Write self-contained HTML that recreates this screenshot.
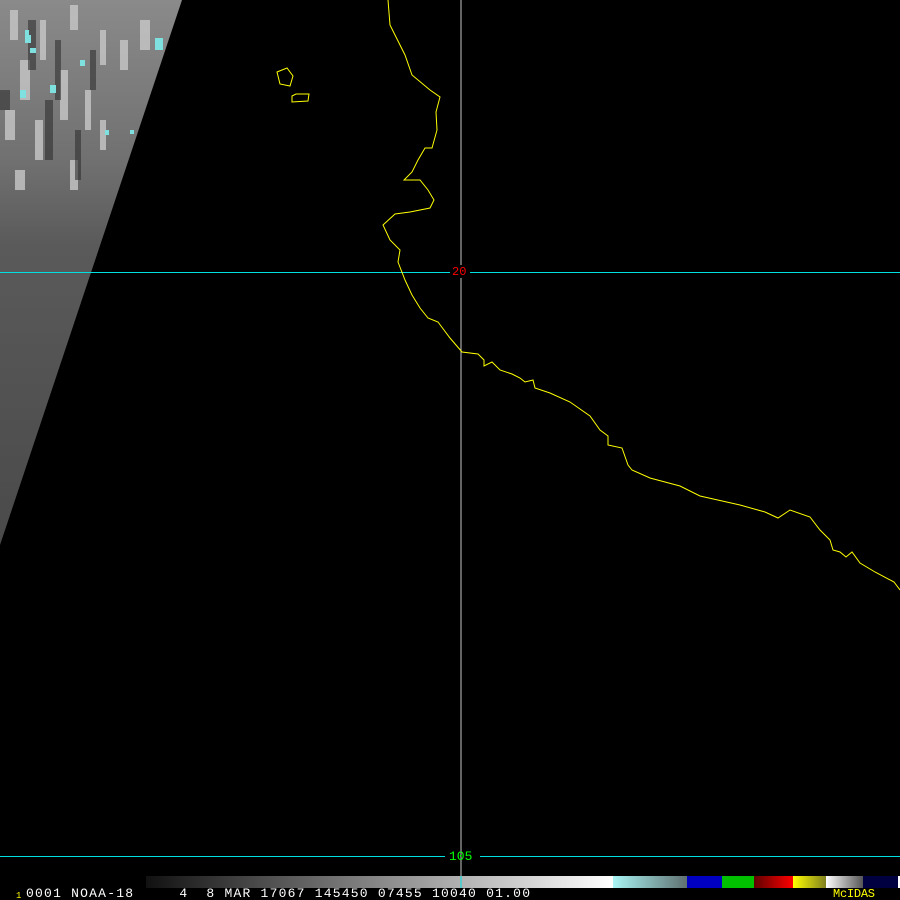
<!DOCTYPE html>
<html><head><style>
html,body{margin:0;padding:0;background:#000;width:900px;height:900px;overflow:hidden}
svg{display:block}
text{font-family:"Liberation Mono",monospace}
</style></head><body>
<svg width="900" height="900" viewBox="0 0 900 900">
<defs>
<linearGradient id="sat" x1="0" y1="0" x2="0" y2="1">
<stop offset="0" stop-color="#8a8a8a"/>
<stop offset="0.3" stop-color="#707070"/>
<stop offset="0.45" stop-color="#5a5a5a"/>
<stop offset="1" stop-color="#4a4a4a"/>
</linearGradient>
<linearGradient id="grey" x1="0" x2="1">
<stop offset="0" stop-color="#111"/><stop offset="1" stop-color="#fff"/>
</linearGradient>
<linearGradient id="cy" x1="0" x2="1">
<stop offset="0" stop-color="#a8f4f4"/><stop offset="1" stop-color="#607070"/>
</linearGradient>
<linearGradient id="rd" x1="0" x2="1">
<stop offset="0" stop-color="#600000"/><stop offset="1" stop-color="#ff0000"/>
</linearGradient>
<linearGradient id="yl" x1="0" x2="1">
<stop offset="0" stop-color="#ffff00"/><stop offset="1" stop-color="#808020"/>
</linearGradient>
<linearGradient id="wg" x1="0" x2="1">
<stop offset="0" stop-color="#fff"/><stop offset="1" stop-color="#555"/>
</linearGradient>
<clipPath id="wedge"><polygon points="0,0 182,0 0,545"/></clipPath>
</defs>
<polygon points="0,0 182,0 0,545" fill="url(#sat)"/>
<g clip-path="url(#wedge)">
<g fill="#c8c8c8" opacity="0.8">
<rect x="10" y="10" width="8" height="30"/><rect x="40" y="20" width="6" height="40"/><rect x="70" y="5" width="8" height="25"/>
<rect x="100" y="30" width="6" height="35"/><rect x="20" y="60" width="10" height="40"/><rect x="60" y="70" width="8" height="50"/>
<rect x="85" y="90" width="6" height="40"/><rect x="120" y="40" width="8" height="30"/><rect x="140" y="20" width="10" height="30"/>
<rect x="5" y="110" width="10" height="30"/><rect x="35" y="120" width="8" height="40"/><rect x="100" y="120" width="6" height="30"/>
<rect x="15" y="170" width="10" height="20"/><rect x="70" y="160" width="8" height="30"/></g>
<g fill="#303030" opacity="0.6">
<rect x="28" y="20" width="8" height="50"/><rect x="55" y="40" width="6" height="60"/><rect x="90" y="50" width="6" height="40"/>
<rect x="0" y="90" width="10" height="20"/><rect x="45" y="100" width="8" height="60"/><rect x="75" y="130" width="6" height="50"/></g>
<g fill="#7fe0e0">
<rect x="25" y="35" width="6" height="8"/><rect x="30" y="48" width="6" height="5"/><rect x="155" y="38" width="8" height="12"/>
<rect x="80" y="60" width="5" height="6"/><rect x="50" y="85" width="6" height="8"/><rect x="25" y="30" width="4" height="5"/>
<rect x="20" y="90" width="6" height="8"/><rect x="105" y="130" width="4" height="5"/><rect x="130" y="130" width="4" height="4"/></g>
</g>
<line x1="461" y1="0" x2="461" y2="876" stroke="#c8c8c8" stroke-width="1"/>
<line x1="0" y1="272.5" x2="900" y2="272.5" stroke="#00e0e0" stroke-width="1"/>
<line x1="0" y1="856.5" x2="445" y2="856.5" stroke="#00e0e0" stroke-width="1"/>
<line x1="480" y1="856.5" x2="900" y2="856.5" stroke="#00e0e0" stroke-width="1"/>
<rect x="450" y="265" width="20" height="13" fill="#000"/>
<text x="452" y="275" font-size="12" fill="#ff0000">20</text>
<text x="449" y="860" font-size="13" fill="#00ff00">105</text>
<g fill="none" stroke="#ffff00" stroke-width="1">
<polyline points="388,0 390,25 405,55 412,75 430,90 440,97 436,112 437,130 432,148 425,148 418,160 412,172 404,180 420,180 428,190 434,200 430,208 410,212 395,214 383,225 390,240 400,250 398,262 405,280 412,295 420,308 428,318 438,322 450,338 456,345 462,352 478,354 484,360 484,366 492,362 500,370 512,374 520,378 525,382 533,380 535,388 550,393 570,402 590,416 600,430 608,436 608,445 622,448 628,465 632,470 650,478 680,486 700,496 740,505 765,512 778,518 790,510 810,517 820,530 830,540 833,550 840,552 846,557 852,552 860,563 875,572 894,582 900,590"/>
<polygon points="277,72 287,68 293,76 290,86 280,84"/>
<polygon points="292,96 296,94 309,94 308,101 292,102"/>
</g>
<rect x="146" y="876" width="467" height="12" fill="url(#grey)"/>
<rect x="613" y="876" width="74" height="12" fill="url(#cy)"/>
<rect x="687" y="876" width="35" height="12" fill="#0000c0"/>
<rect x="722" y="876" width="32" height="12" fill="#00c000"/>
<rect x="754" y="876" width="39" height="12" fill="url(#rd)"/>
<rect x="793" y="876" width="33" height="12" fill="url(#yl)"/>
<rect x="826" y="876" width="37" height="12" fill="url(#wg)"/>
<rect x="863" y="876" width="35" height="12" fill="#000040"/>
<rect x="898" y="876" width="2" height="12" fill="#fff"/>
<line x1="461" y1="876" x2="461" y2="888" stroke="#00e0e0"/>
<text x="16" y="898" font-size="9" fill="#ffff00">1</text>
<text x="26" y="897" font-size="13" fill="#ffffff" xml:space="preserve" textLength="504" lengthAdjust="spacing">0001 NOAA-18     4  8 MAR 17067 145450 07455 10040 01.00</text>
<text x="833" y="897" font-size="12" fill="#ffff00" textLength="42" lengthAdjust="spacing">McIDAS</text>
</svg>
</body></html>
